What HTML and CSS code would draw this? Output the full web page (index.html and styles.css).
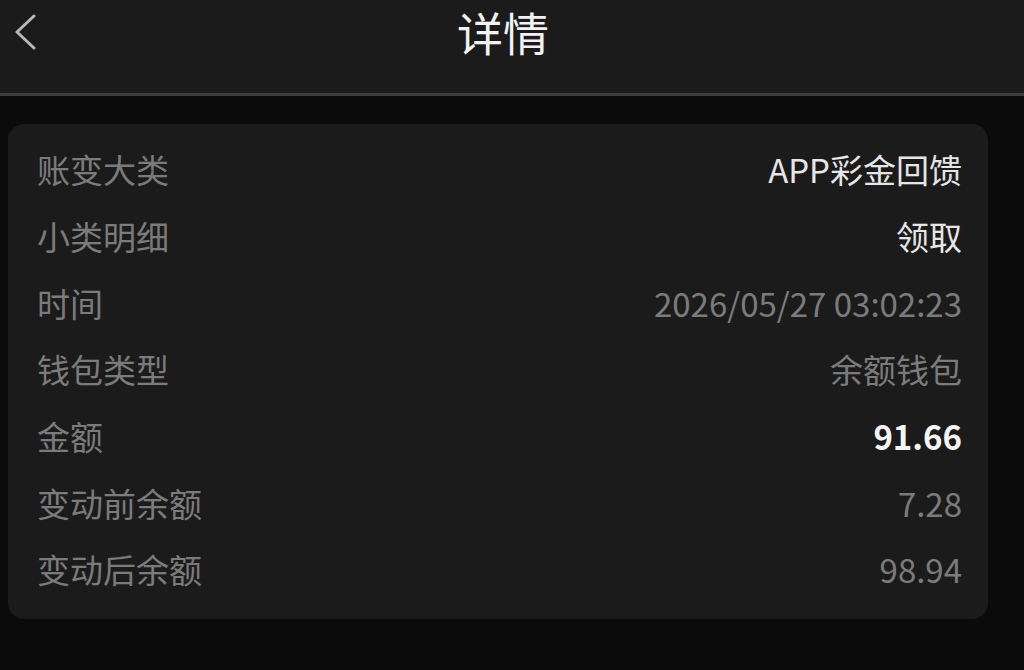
FILE: index.html
```html
<!DOCTYPE html>
<html lang="zh-CN">
<head>
<meta charset="utf-8">
<link rel="stylesheet" href="styles.css">
</head>
<body>
<header class="topbar">
  <span class="back">
    <svg width="26" height="36" viewBox="0 0 26 36"><path d="M22 2 L5 18 L22 34" fill="none" stroke="#b8b8b8" stroke-width="3" stroke-linecap="round" stroke-linejoin="round"/></svg>
  </span>
  <h1 class="title">详情</h1>
</header>
<main class="content">
  <section class="card">
    <div class="row"><span class="label">账变大类</span><span class="value bright">APP彩金回馈</span></div>
    <div class="row"><span class="label">小类明细</span><span class="value bright">领取</span></div>
    <div class="row"><span class="label">时间</span><span class="value">2026/05/27 03:02:23</span></div>
    <div class="row"><span class="label">钱包类型</span><span class="value">余额钱包</span></div>
    <div class="row"><span class="label">金额</span><span class="value strong">91.66</span></div>
    <div class="row"><span class="label">变动前余额</span><span class="value">7.28</span></div>
    <div class="row"><span class="label">变动后余额</span><span class="value">98.94</span></div>
  </section>
</main>
</body>
</html>
```
FILE: styles.css
```css
html, body {
  margin: 0;
  padding: 0;
  background: #0b0b0b;
  font-family: "Noto Sans CJK SC", "Noto Sans", sans-serif;
  width: 1024px;
  height: 670px;
  overflow: hidden;
}
.topbar {
  height: 93px;
  background: #1b1b1b;
  border-bottom: 3px solid #3c3c3c;
  position: relative;
  display: flex;
  justify-content: center;
}
.back {
  position: absolute;
  left: 12px;
  top: 14px;
}
.title {
  margin: 0;
  font-weight: 400;
  font-size: 46px;
  line-height: 62px;
  color: #f2f2f2;
  margin-right: 18px;
}
.content {
  padding: 28px 36px 0 8px;
}
.card {
  background: #1b1b1b;
  border-radius: 16px;
  padding: 12px 26px 16px 29px;
}
.row {
  height: 66.7px;
  display: flex;
  align-items: center;
  justify-content: space-between;
  font-size: 33px;
}
.label {
  color: #7b7b7b;
}
.value {
  color: #7b7b7b;
}
.value.bright {
  color: #e6e6e6;
}
.value.strong {
  color: #f5f5f5;
  font-weight: 700;
}
```
